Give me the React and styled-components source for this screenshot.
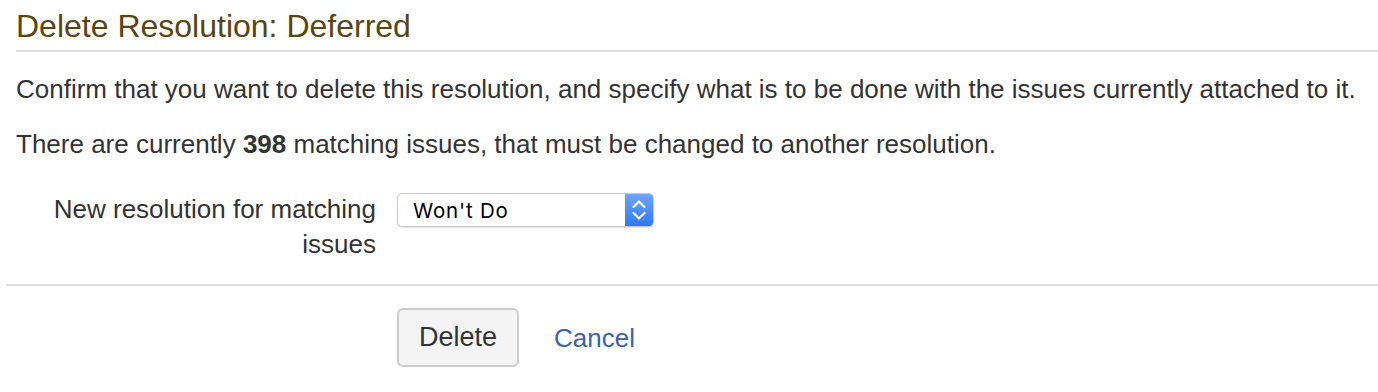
import React from "react";
import styled, { createGlobalStyle } from "styled-components";

const GlobalStyle = createGlobalStyle`
  html, body {
    margin: 0;
    padding: 0;
    background: #fff;
  }

  body {
    font-family: "Liberation Sans", Arial, sans-serif;
    color: #333;
  }
`;

const Page = styled.div`
  width: 100%;
  padding: 0 0 0 6px;
  box-sizing: border-box;
`;

const Section = styled.div`
  padding: 0 0 0 10px;
`;

const Heading = styled.h2`
  margin: 0;
  padding: 6px 0 4px 0;
  font-size: 32px;
  line-height: 40px;
  font-weight: 400;
  color: #5a4512;
  border-bottom: 2px solid #dddddd;
`;

const Text = styled.p`
  margin: ${(p) => p.$top || 0}px 0 0 0;
  font-size: 26px;
  line-height: 30px;
  color: #333;

  strong {
    font-weight: 700;
  }
`;

const FieldRow = styled.div`
  display: flex;
  flex-direction: row;
  align-items: flex-start;
  gap: 21px;
  margin: 33px 0 22px 0;
`;

const Label = styled.label`
  width: 360px;
  text-align: right;
  font-size: 26px;
  line-height: 35px;
  color: #333;
`;

const Select = styled.div`
  width: 257px;
  height: 34px;
  margin: 1px 0 0 0;
  box-sizing: border-box;
  display: flex;
  flex-direction: row;
  align-items: stretch;
  border: 1px solid #c9c9c9;
  border-radius: 5px;
  background: #fff;
  box-shadow: 0 1px 1px rgba(0, 0, 0, 0.12);
  overflow: hidden;

  .value {
    flex: 1;
    display: flex;
    align-items: center;
    padding: 0 0 0 15px;
    font-family: Inter, "Liberation Sans", sans-serif;
    font-size: 20.5px;
    letter-spacing: 0.8px;
    color: #000;
  }

  .arrows {
    width: 28px;
    display: flex;
    align-items: center;
    justify-content: center;
    background: linear-gradient(#6ea6f9, #2d79f4);
  }
`;

const Actions = styled.div`
  display: flex;
  flex-direction: row;
  align-items: center;
  gap: 35px;
  border-top: 2px solid #dddddd;
  padding: 22px 0 0 391px;
`;

const Button = styled.button`
  width: 122px;
  height: 59px;
  box-sizing: border-box;
  border: 2px solid #cccccc;
  border-radius: 6px;
  background: #f4f4f4;
  font-family: "Liberation Sans", Arial, sans-serif;
  font-size: 27px;
  color: #333;
  padding: 0;
`;

const LinkButton = styled.a`
  font-size: 26px;
  color: #3b62aa;
  text-decoration: none;
  margin: 1px 0 0 0;
`;

const Chevrons = () => (
  <svg width="14" height="22" viewBox="0 0 14 22" fill="none">
    <path d="M1.5 8 L7 2.5 L12.5 8" stroke="#fff" strokeWidth="2.2" strokeLinecap="round" strokeLinejoin="round" />
    <path d="M1.5 14 L7 19.5 L12.5 14" stroke="#fff" strokeWidth="2.2" strokeLinecap="round" strokeLinejoin="round" />
  </svg>
);

const App = () => {
  return (
    <Page>
      <GlobalStyle />
      <Section>
        <Heading>Delete Resolution: Deferred</Heading>
        <Text $top={22}>
          Confirm that you want to delete this resolution, and specify what is to be done with the issues currently
          attached to it.
        </Text>
        <Text $top={25}>
          There are currently <strong>398</strong> matching issues, that must be changed to another resolution.
        </Text>
        <FieldRow>
          <Label>New resolution for matching issues</Label>
          <Select>
            <div className="value">Won't Do</div>
            <div className="arrows">
              <Chevrons />
            </div>
          </Select>
        </FieldRow>
      </Section>
      <Actions>
        <Button>Delete</Button>
        <LinkButton href="#">Cancel</LinkButton>
      </Actions>
    </Page>
  );
};

export default App;
